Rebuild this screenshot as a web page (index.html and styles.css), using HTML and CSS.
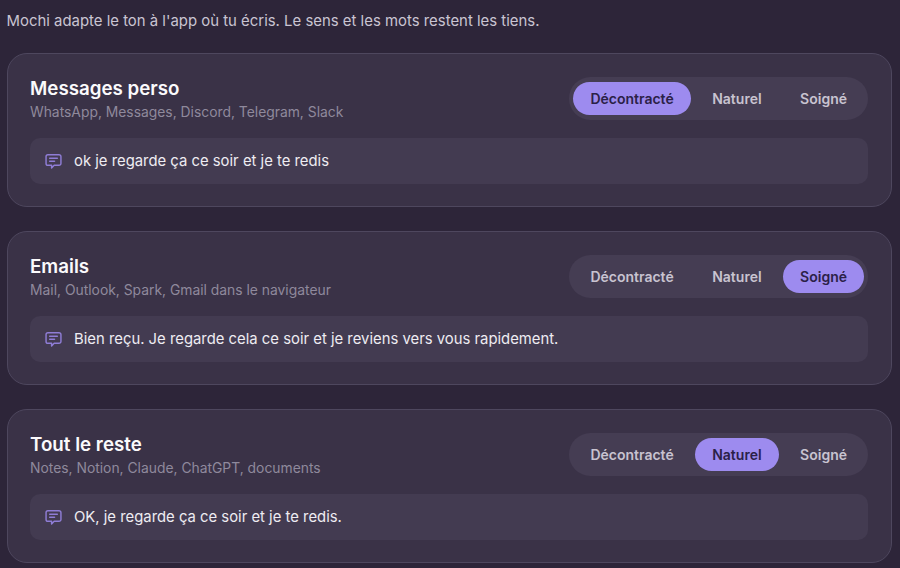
FILE: index.html
```html
<!DOCTYPE html>
<html lang="fr">
<head>
<meta charset="utf-8">
<title>Mochi</title>
<link rel="stylesheet" href="styles.css">
</head>
<body>
<main class="page">
  <p class="intro">Mochi adapte le ton à l'app où tu écris. Le sens et les mots restent les tiens.</p>
  <section class="card">
    <div class="head">
      <div>
        <h2 class="title">Messages perso</h2>
        <p class="apps">WhatsApp, Messages, Discord, Telegram, Slack</p>
      </div>
      <div class="seg">
        <span class="opt on">Décontracté</span><span class="opt">Naturel</span><span class="opt">Soigné</span>
      </div>
    </div>
    <div class="preview">
      <svg class="ico" viewBox="0 0 16 16" fill="none" stroke="currentColor" stroke-width="1.35" stroke-linecap="round" stroke-linejoin="round"><path d="M2.8 1.6h10.400a1.800 1.800 0 0 1 1.800 1.800v6.400a1.800 1.800 0 0 1-1.800 1.800H8.600l-2.400 2.600v-2.600H2.800A1.800 1.800 0 0 1 1 9.800V3.400a1.800 1.800 0 0 1 1.800-1.800z"/><path d="M4.400 5h7.200M4.400 7.800h4.600"/></svg>
      <span>ok je regarde ça ce soir et je te redis</span>
    </div>
  </section>
  <section class="card">
    <div class="head">
      <div>
        <h2 class="title">Emails</h2>
        <p class="apps">Mail, Outlook, Spark, Gmail dans le navigateur</p>
      </div>
      <div class="seg">
        <span class="opt">Décontracté</span><span class="opt">Naturel</span><span class="opt on">Soigné</span>
      </div>
    </div>
    <div class="preview">
      <svg class="ico" viewBox="0 0 16 16" fill="none" stroke="currentColor" stroke-width="1.35" stroke-linecap="round" stroke-linejoin="round"><path d="M2.8 1.6h10.400a1.800 1.800 0 0 1 1.800 1.800v6.400a1.800 1.800 0 0 1-1.800 1.800H8.600l-2.400 2.600v-2.600H2.800A1.800 1.800 0 0 1 1 9.800V3.400a1.800 1.800 0 0 1 1.800-1.800z"/><path d="M4.400 5h7.200M4.400 7.800h4.600"/></svg>
      <span>Bien reçu. Je regarde cela ce soir et je reviens vers vous rapidement.</span>
    </div>
  </section>
  <section class="card">
    <div class="head">
      <div>
        <h2 class="title">Tout le reste</h2>
        <p class="apps">Notes, Notion, Claude, ChatGPT, documents</p>
      </div>
      <div class="seg">
        <span class="opt">Décontracté</span><span class="opt on">Naturel</span><span class="opt">Soigné</span>
      </div>
    </div>
    <div class="preview">
      <svg class="ico" viewBox="0 0 16 16" fill="none" stroke="currentColor" stroke-width="1.35" stroke-linecap="round" stroke-linejoin="round"><path d="M2.8 1.6h10.400a1.800 1.800 0 0 1 1.800 1.800v6.400a1.800 1.800 0 0 1-1.800 1.800H8.600l-2.400 2.600v-2.600H2.800A1.800 1.800 0 0 1 1 9.800V3.400a1.800 1.800 0 0 1 1.800-1.800z"/><path d="M4.400 5h7.200M4.400 7.800h4.600"/></svg>
      <span>OK, je regarde ça ce soir et je te redis.</span>
    </div>
  </section>
</main>
</body>
</html>
```
FILE: styles.css
```css
html, body {
  margin: 0;
  height: 100%;
  overflow: hidden;
}
body {
  background: #2d2539;
  font-family: Inter, "Liberation Sans", sans-serif;
  color: #fff;
}
.page {
  padding: 12px 8.5px 0 6.5px;
  display: flex;
  flex-direction: column;
}
.intro {
  margin: 0 0 23px;
  height: 18px;
  line-height: 18px;
  font-size: 14.92px;
  color: #c9c4d2;
}
.card {
  box-sizing: border-box;
  height: 154px;
  margin-bottom: 24px;
  padding: 23px 22.5px 22px;
  border: 1px solid #4e475e;
  border-radius: 20px;
  background: #3a3247;
  flex: none;
}
.head {
  display: flex;
  justify-content: space-between;
  align-items: center;
  height: 43px;
  margin-bottom: 17.5px;
}
.title {
  margin: 0;
  font-size: 18.75px;
  line-height: 24px;
  font-weight: 600;
  color: #fbfafc;
}
.apps {
  margin: 2px 0 0;
  font-size: 13.87px;
  line-height: 18px;
  color: #8f899c;
}
.seg {
  display: flex;
  gap: 4.5px;
  padding: 5px 4px;
  border-radius: 22px;
  background: #453d53;
}
.opt {
  padding: 0 17px;
  height: 33px;
  line-height: 33px;
  border-radius: 17px;
  font-size: 14px;
  font-weight: 600;
  color: #c8c3d0;
}
.on {
  background: #9d8bef;
  color: #2b2147;
}
.preview {
  display: flex;
  align-items: center;
  gap: 12px;
  height: 46.5px;
  padding: 0 15px;
  border-radius: 10px;
  background: #433b51;
  font-size: 14.85px;
  color: #eeecf2;
}
.ico {
  width: 17px;
  height: 17px;
  margin-top: 2px;
  color: #8f7dd6;
  flex: none;
}
```
